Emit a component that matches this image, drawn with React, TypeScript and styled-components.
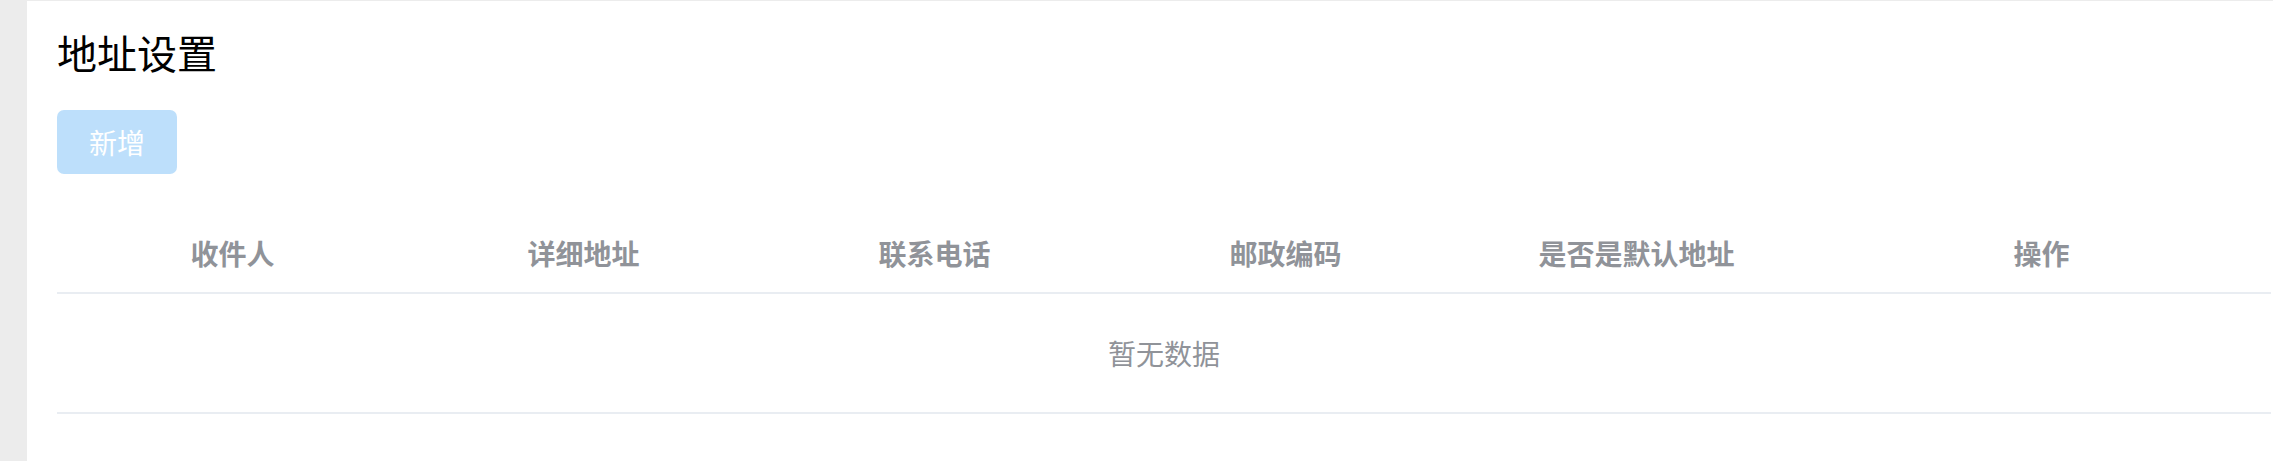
import { createGlobalStyle } from "styled-components";
import styled from "styled-components";

const GlobalStyle = createGlobalStyle`
  html, body {
    margin: 0;
    padding: 0;
    background: #ececec;
  }
  body {
    font-family: "Noto Sans CJK SC", "Noto Sans", sans-serif;
  }
`;

const Page = styled.div`
  height: 461px;
  padding: 1px 0 0 27px;
  box-sizing: border-box;
  display: flex;
  overflow: hidden;
`;

const Panel = styled.section`
  flex: 1;
  background: #fff;
  padding: 23px 2px 0 30px;
  box-sizing: border-box;
`;

const Title = styled.h2`
  margin: 0;
  font-size: 40px;
  line-height: 56px;
  font-weight: 400;
  color: #000;
`;

const AddButton = styled.button`
  margin-top: 30px;
  width: 120px;
  height: 64px;
  border: none;
  border-radius: 7px;
  background: #bddffb;
  color: #fff;
  font-family: inherit;
  font-size: 28px;
  cursor: not-allowed;
  display: flex;
  align-items: center;
  justify-content: center;
`;

const Table = styled.div`
  margin-top: 40px;
`;

const Row = styled.div`
  display: grid;
  grid-template-columns: repeat(5, 351px) 1fr;
  border-bottom: 2px solid #e9edf2;
`;

const HeadCell = styled.div`
  height: 78px;
  display: flex;
  align-items: center;
  justify-content: center;
  font-size: 28px;
  font-weight: 700;
  color: #909399;
`;

const Empty = styled.div`
  height: 118px;
  display: flex;
  align-items: center;
  justify-content: center;
  font-size: 28px;
  color: #909399;
  border-bottom: 2px solid #e9edf2;
`;

const columns = ["收件人", "详细地址", "联系电话", "邮政编码", "是否是默认地址", "操作"];

export default function App() {
  return (
    <>
      <GlobalStyle />
      <Page>
        <Panel>
          <Title>地址设置</Title>
          <AddButton disabled>新增</AddButton>
          <Table>
            <Row>
              {columns.map((c) => (
                <HeadCell key={c}>{c}</HeadCell>
              ))}
            </Row>
            <Empty>暂无数据</Empty>
          </Table>
        </Panel>
      </Page>
    </>
  );
}
